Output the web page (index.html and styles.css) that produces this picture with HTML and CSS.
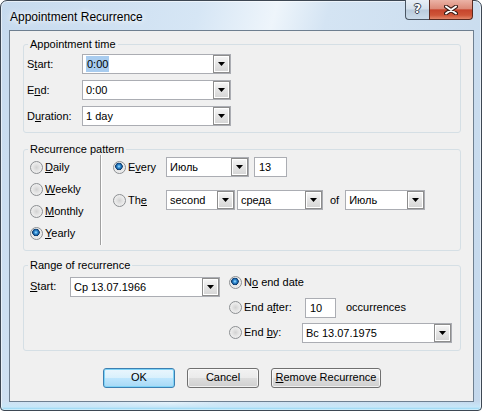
FILE: index.html
```html
<!DOCTYPE html>
<html>
<head>
    <title>Appointment Recurrence</title>
    <link rel="stylesheet" href="styles.css">
</head>
<body>
<div class="window">
    <div class="titlebar">
        <span class="title">Appointment Recurrence</span>
        <div class="caption-buttons">
            <div class="caption-btn help">?</div>
            <div class="caption-btn close">
                <svg width="14" height="10" viewBox="0 0 14 10">
                    <path d="M2 1.5 L12 8.5 M12 1.5 L2 8.5" stroke="#3a1c16" stroke-width="4" stroke-linecap="round"/>
                    <path d="M2 1.5 L12 8.5 M12 1.5 L2 8.5" stroke="#fff" stroke-width="2" stroke-linecap="round"/>
                </svg>
            </div>
        </div>
    </div>

    <div class="client">
        <fieldset class="group time">
            <legend>Appointment time</legend>
            <div class="group-body">
                <div class="field-row">
                    <span class="label">S<u>t</u>art:</span>
                    <div class="combo w149"><span class="value"><span class="sel">0:00</span></span><span class="drop"><svg width="7" height="4" viewBox="0 0 7 4"><polygon points="0,0 7,0 3.5,4"/></svg></span></div>
                </div>
                <div class="field-row">
                    <span class="label">E<u>n</u>d:</span>
                    <div class="combo w149"><span class="value">0:00</span><span class="drop"><svg width="7" height="4" viewBox="0 0 7 4"><polygon points="0,0 7,0 3.5,4"/></svg></span></div>
                </div>
                <div class="field-row">
                    <span class="label">D<u>u</u>ration:</span>
                    <div class="combo w149"><span class="value">1 day</span><span class="drop"><svg width="7" height="4" viewBox="0 0 7 4"><polygon points="0,0 7,0 3.5,4"/></svg></span></div>
                </div>
            </div>
        </fieldset>

        <fieldset class="group pattern">
            <legend>Recurrence pattern</legend>
            <div class="group-body">
                <div class="kinds">
                    <div class="opt"><span class="radio"></span><span><u>D</u>aily</span></div>
                    <div class="opt"><span class="radio"></span><span><u>W</u>eekly</span></div>
                    <div class="opt"><span class="radio"></span><span><u>M</u>onthly</span></div>
                    <div class="opt"><span class="radio on"></span><span><u>Y</u>early</span></div>
                </div>
                <div class="pattern-detail">
                    <div class="opt every">
                        <span class="radio on"></span><span class="opt-label">E<u>v</u>ery</span>
                        <div class="combo w83"><span class="value">Июль</span><span class="drop"><svg width="7" height="4" viewBox="0 0 7 4"><polygon points="0,0 7,0 3.5,4"/></svg></span></div>
                        <div class="textbox w33">13</div>
                    </div>
                    <div class="opt the">
                        <span class="radio"></span><span class="opt-label">Th<u>e</u></span>
                        <div class="combo w69"><span class="value">second</span><span class="drop"><svg width="7" height="4" viewBox="0 0 7 4"><polygon points="0,0 7,0 3.5,4"/></svg></span></div>
                        <div class="combo w86"><span class="value">среда</span><span class="drop"><svg width="7" height="4" viewBox="0 0 7 4"><polygon points="0,0 7,0 3.5,4"/></svg></span></div>
                        <span class="of">of</span>
                        <div class="combo w80"><span class="value">Июль</span><span class="drop"><svg width="7" height="4" viewBox="0 0 7 4"><polygon points="0,0 7,0 3.5,4"/></svg></span></div>
                    </div>
                </div>
            </div>
        </fieldset>

        <fieldset class="group range">
            <legend>Range of recurrence</legend>
            <div class="group-body">
                <div class="range-start">
                    <span class="start-label"><u>S</u>tart:</span>
                    <div class="combo w150"><span class="value">Ср 13.07.1966</span><span class="drop"><svg width="7" height="4" viewBox="0 0 7 4"><polygon points="0,0 7,0 3.5,4"/></svg></span></div>
                </div>
                <div class="range-end">
                    <div class="opt"><span class="radio on"></span><span>N<u>o</u> end date</span></div>
                    <div class="opt">
                        <span class="radio"></span><span class="after-label">End a<u>f</u>ter:</span>
                        <div class="textbox w31">10</div>
                        <span class="occ">occurrences</span>
                    </div>
                    <div class="opt">
                        <span class="radio"></span><span class="by-label">End <u>b</u>y:</span>
                        <div class="combo w150"><span class="value">Вс 13.07.1975</span><span class="drop"><svg width="7" height="4" viewBox="0 0 7 4"><polygon points="0,0 7,0 3.5,4"/></svg></span></div>
                    </div>
                </div>
            </div>
        </fieldset>

        <div class="buttons">
            <div class="btn default w72">OK</div>
            <div class="btn w72">Cancel</div>
            <div class="btn w110"><span><u>R</u>emove Recurrence</span></div>
        </div>
    </div>
</div>
</body>
</html>
```

FILE: styles.css
```css
body {
    margin: 0;
    padding: 0;
    font-family: "Liberation Sans", Arial, sans-serif;
    font-size: 11px;
    line-height: 13px;
    color: #000;
    background: #fff;
}

/* window frame */
.window {
    width: 482px;
    height: 411px;
    box-sizing: border-box;
    border: 1px solid #3d4753;
    border-radius: 7px 7px 4px 4px;
    background:
        linear-gradient(to top, #7fd0f2 0, #c8e7f8 3px, rgba(255,255,255,0) 9px),
        linear-gradient(105deg, #c6daee 0%, #d6e6f5 34%, #eef5fb 47%, #d4e4f3 56%, #c4d8ec 100%);
    box-shadow: inset 0 0 0 1px rgba(255, 255, 255, 0.55);
    display: flex;
    flex-direction: column;
}

.titlebar {
    height: 29px;
    flex: none;
    display: flex;
    justify-content: space-between;
    align-items: flex-start;
    padding-left: 9px;
}

.title {
    font-size: 12px;
    line-height: 16px;
    margin-top: 8px;
    text-shadow: 0 0 5px #fff, 0 0 8px #fff;
}

.caption-buttons {
    display: flex;
    margin-top: -1px;
    margin-right: 8px;
}

.caption-btn {
    height: 20px;
    box-sizing: border-box;
    border: 1px solid #4a5663;
    border-top: none;
}

.help {
    width: 24px;
    border-right: none;
    border-radius: 0 0 0 4px;
    background: linear-gradient(#e8eff6 0%, #d3dfeb 48%, #b9cbdc 52%, #cbdcea 100%);
    color: #fff;
    font-family: "DejaVu Sans", sans-serif;
    font-weight: bold;
    font-size: 12px;
    line-height: 18px;
    text-align: center;
    text-shadow: 1px 0 #33404d, -1px 0 #33404d, 0 1px #33404d, 0 -1px #33404d;
}

.close {
    width: 44px;
    border-color: #5b2a20;
    border-radius: 0 0 4px 0;
    background: linear-gradient(#ebb3a6 0%, #dc8a78 46%, #c6442c 52%, #cf5538 80%, #e3876a 100%);
    display: flex;
    align-items: center;
    justify-content: center;
}

/* client area */
.client {
    flex: 1;
    margin: 0 7px 8px 8px;
    border: 1px solid #6e7f90;
    background: #f0f0f0;
    padding: 7px 12px 0 13px;
    display: flex;
    flex-direction: column;
}

.group {
    margin: 0;
    padding: 0;
    min-width: 0;
    border: 1px solid #d5dfe5;
    border-radius: 3px;
}

.group legend {
    padding: 0 2px;
    margin-left: 4px;
    line-height: 13px;
}

.time .group-body {
    padding: 3px 0 6px 3px;
    display: flex;
    flex-direction: column;
    gap: 6px;
}

.field-row {
    display: flex;
    align-items: center;
    height: 20px;
}

.label {
    width: 55px;
}

/* combo boxes and text fields */
.combo {
    height: 20px;
    box-sizing: border-box;
    border: 1px solid #abadb3;
    background: #fff;
    display: flex;
}

.combo .value {
    flex: 1;
    padding-left: 3px;
    line-height: 18px;
    white-space: nowrap;
    overflow: hidden;
}

.sel {
    background: #a8ccef;
    padding: 2px 1px;
}

.drop {
    width: 17px;
    height: 18px;
    box-sizing: border-box;
    border: 1px solid #8d8d8d;
    background: linear-gradient(#f7f7f7, #e4e4e4 50%, #d5d5d5);
    box-shadow: inset 0 0 0 1px #fff;
    display: flex;
    align-items: center;
    justify-content: center;
}

.drop svg {
    fill: #000;
}

.textbox {
    height: 20px;
    box-sizing: border-box;
    border: 1px solid #abadb3;
    background: #fff;
    padding-left: 4px;
    line-height: 18px;
}

.w31 { width: 31px; }
.w33 { width: 33px; }
.w69 { width: 69px; }
.w72 { width: 72px; }
.w80 { width: 80px; }
.w83 { width: 83px; }
.w86 { width: 86px; }
.w110 { width: 110px; }
.w149 { width: 149px; }
.w150 { width: 150px; }

/* radios */
.opt {
    display: flex;
    align-items: center;
    height: 20px;
}

.radio {
    width: 13px;
    height: 13px;
    flex: none;
    box-sizing: border-box;
    border-radius: 50%;
    border: 1px solid #8c8f92;
    margin-right: 2px;
    background: radial-gradient(circle, #d2d2d2 0, #e6e6e6 45%, #f7f7f7 100%);
}

.radio.on {
    background:
        radial-gradient(circle at 45% 40%, #a9e4ff 0, #3b97dc 1.4px, #175a9a 2.8px, #0c3563 3.5px, rgba(0,0,0,0) 4px),
        radial-gradient(circle, #d2d2d2 0, #e6e6e6 45%, #f7f7f7 100%);
}

/* recurrence pattern */
.pattern {
    margin-top: 10px;
}

.pattern .group-body {
    padding: 1px 0 6px 6px;
    display: flex;
}

.kinds {
    width: 70px;
    display: flex;
    flex-direction: column;
    gap: 2.33px;
}

.pattern-detail {
    margin-top: -2px;
    margin-bottom: -1px;
    padding: 2px 0 0 12px;
    border-left: 1px solid #a0a0a0;
    box-shadow: inset 1px 0 #fff;
    display: flex;
    flex-direction: column;
    gap: 13px;
}

.opt-label {
    width: 38px;
}

.every .textbox {
    margin-left: 5px;
}

.the .combo + .combo {
    margin-left: 2px;
}

.of {
    margin: 0 6px 0 7px;
}

/* range of recurrence */
.range {
    margin-top: 8px;
}

.range .group-body {
    padding: 1px 0 7px 6px;
    display: flex;
}

.range-start {
    display: flex;
    align-items: center;
    height: 20px;
    margin-top: 4px;
}

.start-label {
    width: 40px;
}

.range-end {
    margin-left: 9px;
    display: flex;
    flex-direction: column;
    gap: 5px;
}

.after-label {
    width: 61px;
}

.by-label {
    width: 58px;
}

.occ {
    margin-left: 10px;
}

/* dialog buttons */
.buttons {
    display: flex;
    justify-content: center;
    gap: 12px;
    margin-top: 17px;
}

.btn {
    height: 20px;
    box-sizing: border-box;
    border: 1px solid #707070;
    border-radius: 3px;
    background: linear-gradient(#f2f2f2 0%, #ebebeb 48%, #dddddd 52%, #cfcfcf 100%);
    box-shadow: inset 0 0 0 1px rgba(255, 255, 255, 0.7);
    display: flex;
    align-items: center;
    justify-content: center;
}

.btn.default {
    border-color: #3c7fb1;
    background: linear-gradient(#eaf6fd 0%, #d9f0fc 48%, #bee6fd 52%, #a7d9f5 100%);
    box-shadow: inset 0 0 0 1px #7ed3f7;
}
```
